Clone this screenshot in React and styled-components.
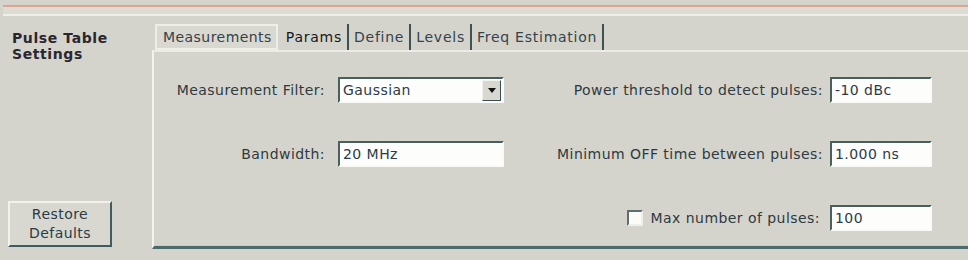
import React from "react";
import styled, { createGlobalStyle } from "styled-components";

const GlobalStyle = createGlobalStyle`
  html, body {
    margin: 0;
    padding: 0;
    background: #d5d4cc;
  }
  body {
    font-family: "DejaVu Sans", "Liberation Sans", sans-serif;
    font-size: 14px;
    letter-spacing: 0.45px;
    color: #2e3942;
  }
`;

const Page = styled.div`
  width: 968px;
  height: 260px;
  background: #d5d4cc;
  display: flex;
  flex-direction: column;
  overflow: hidden;
`;

const TopRule = styled.div`
  margin: 5px 0 0 3px;
  height: 7px;
  border-top: 2px solid #dba592;
  border-bottom: 2px solid #efefe9;
  background: #dcdbd4;
`;

const Body = styled.div`
  flex: 1;
  display: flex;
`;

const Sidebar = styled.div`
  width: 144px;
  padding: 14px 0 13px 8px;
  display: flex;
  flex-direction: column;
  justify-content: space-between;
`;

const Heading = styled.div`
  padding-left: 4px;
  font-weight: bold;
  font-size: 14px;
  letter-spacing: 0.6px;
  line-height: 16px;
  color: #2a2630;
`;

const RaisedButton = styled.button`
  width: 104px;
  height: 46px;
  padding: 0;
  font: inherit;
  letter-spacing: inherit;
  line-height: 19px;
  color: #2b3a44;
  background: #d8d7d0;
  border: 2px solid;
  border-color: #f2f1ec #3f5c5e #3f5c5e #f2f1ec;
`;

const Main = styled.div`
  flex: 1;
  display: flex;
  flex-direction: column;
  padding-top: 8px;
  margin-bottom: 11px;
`;

const Tabs = styled.div`
  display: flex;
  align-items: stretch;
  height: 26px;
  padding-left: 3px;
  letter-spacing: 0.75px;
`;

const Tab = styled.div`
  display: flex;
  align-items: center;
  padding: 0 5px;
  color: ${p => (p.active ? "#15181c" : "#34424a")};
  border-right: 2px solid #3c5254;
`;

const FocusedTab = styled(Tab)`
  border: 2px solid #eeeee8;
  padding: 0 4px 0 6px;
  margin-right: 3px;
  letter-spacing: 0.45px;
  background: #d9d8d1;
`;

const Panel = styled.div`
  flex: 1;
  border-left: 2px solid #f4f4ef;
  border-top: 2px solid #ecece6;
  border-bottom: 3px solid #4c6a6b;
  box-shadow: 0 -1px 0 #e4c3b4 inset;
  display: grid;
  grid-template-columns: 184px 166px 1fr 102px;
  grid-auto-rows: 26px;
  row-gap: 38px;
  padding: 25px 36px 0 0;
  align-content: start;
`;

const Label = styled.div`
  display: flex;
  align-items: center;
  justify-content: flex-end;
  gap: 8px;
  padding-right: ${p => p.gap || 13}px;
  white-space: nowrap;
`;

const Field = styled.div`
  background: #fdfdfc;
  border: 2px solid;
  border-color: #48615f #fafaf8 #fafaf8 #48615f;
  display: flex;
  align-items: center;
  padding-left: 3px;
  color: #2c3a48;
  white-space: nowrap;
`;

const Select = styled(Field)`
  justify-content: space-between;
  padding-right: 1px;
`;

const DropButton = styled.div`
  width: 17px;
  height: 19px;
  background: #d8d7d0;
  border: 1px solid;
  border-color: #f2f2ee #3a4e50 #3a4e50 #f2f2ee;
  display: flex;
  align-items: center;
  justify-content: center;
  &::after {
    content: "";
    border-left: 4px solid transparent;
    border-right: 4px solid transparent;
    border-top: 5px solid #111;
  }
`;

const Check = styled.span`
  width: 12px;
  height: 12px;
  background: #fbfbf8;
  border: 2px solid;
  border-color: #5d6f70 #eeeeea #eeeeea #5d6f70;
`;

const Empty = styled.div``;

export default function App() {
  return (
    <Page>
      <GlobalStyle />
      <TopRule />
      <Body>
        <Sidebar>
          <Heading>
            Pulse Table
            <br />
            Settings
          </Heading>
          <RaisedButton>
            Restore
            <br />
            Defaults
          </RaisedButton>
        </Sidebar>
        <Main>
          <Tabs>
            <FocusedTab>Measurements</FocusedTab>
            <Tab active>Params</Tab>
            <Tab>Define</Tab>
            <Tab>Levels</Tab>
            <Tab>Freq Estimation</Tab>
          </Tabs>
          <Panel>
            <Label>Measurement Filter:</Label>
            <Select>
              Gaussian
              <DropButton />
            </Select>
            <Label gap={7}>Power threshold to detect pulses:</Label>
            <Field>-10 dBc</Field>

            <Label>Bandwidth:</Label>
            <Field>20 MHz</Field>
            <Label gap={7}>Minimum OFF time between pulses:</Label>
            <Field>1.000 ns</Field>

            <Empty />
            <Empty />
            <Label gap={10}>
              <Check />
              Max number of pulses:
            </Label>
            <Field>100</Field>
          </Panel>
        </Main>
      </Body>
    </Page>
  );
}
